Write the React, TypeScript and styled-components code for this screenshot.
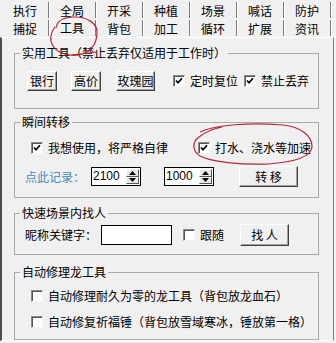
import React from "react";
import styled, { createGlobalStyle } from "styled-components";

const GlobalStyle = createGlobalStyle`
  html, body {
    margin: 0;
    padding: 0;
    background: #f0f0f0;
  }
  body {
    font-family: "Noto Sans CJK SC", "Noto Sans", sans-serif;
    font-size: 12px;
    color: #000;
  }
`;

const topTabs = ["执行", "全局", "开采", "种植", "场景", "喊话", "防护"];
const bottomTabs = ["捕捉", "工具", "背包", "加工", "循环", "扩展", "资讯"];

function Check({ checked }: { checked?: boolean }) {
  return (
    <CheckBox>
      {checked && (
        <svg width="8" height="8" viewBox="0 0 8 8">
          <path d="M1 3.5 L3 5.8 L7 1.2" fill="none" stroke="#000" strokeWidth="1.7" />
        </svg>
      )}
    </CheckBox>
  );
}

function CheckItem({
  label,
  checked,
  ml = 0,
}: {
  label: string;
  checked?: boolean;
  ml?: number;
}) {
  return (
    <CheckWrap $ml={ml}>
      <Check checked={checked} />
      <CheckLabel>{label}</CheckLabel>
    </CheckWrap>
  );
}

function Spin({ value, ml }: { value: string; ml: number }) {
  return (
    <SpinBox $ml={ml}>
      <SpinText>{value}</SpinText>
      <SpinButtons>
        <SpinBtn>
          <svg width="7" height="4" viewBox="0 0 7 4">
            <path d="M3.5 0 L7 4 L0 4 Z" fill="#000" />
          </svg>
        </SpinBtn>
        <SpinBtn>
          <svg width="7" height="4" viewBox="0 0 7 4">
            <path d="M0 0 L7 0 L3.5 4 Z" fill="#000" />
          </svg>
        </SpinBtn>
      </SpinButtons>
    </SpinBox>
  );
}

export default function App() {
  return (
    <Window>
      <GlobalStyle />
      <TabStrip>
        <TabRow>
          {topTabs.map((t) => (
            <Tab key={t}>{t}</Tab>
          ))}
        </TabRow>
        <TabRow>
          {bottomTabs.map((t) => (
            <Tab key={t} $active={t === "工具"}>
              {t}
            </Tab>
          ))}
        </TabRow>
      </TabStrip>

      <Panel>
        <Group $mt={0} $pb={17}>
          <Legend>实用工具（禁止丢弃仅适用于工作时）</Legend>
          <Row $mt={11} $h={20} $pl={12}>
            <Button $w={30} $h={20}>银行</Button>
            <Button $w={30} $h={20} $ml={14}>高价</Button>
            <Button $w={39} $h={20} $ml={15}>玫瑰园</Button>
            <CheckItem label="定时复位" checked ml={18} />
            <CheckItem label="禁止丢弃" checked ml={6} />
          </Row>
        </Group>

        <Group $mt={6} $pb={10}>
          <Legend>瞬间转移</Legend>
          <Row $mt={11} $h={16} $pl={16}>
            <CheckItem label="我想使用，将严格自律" checked />
            <CheckItem label="打水、浇水等加速" checked ml={30} />
          </Row>
          <Row $mt={10} $h={21} $pl={10}>
            <Hint>点此记录：</Hint>
            <Spin value="2100" ml={6} />
            <Spin value="1000" ml={23} />
            <Button $w={59} $h={21} $ml={25}>转 移</Button>
          </Row>
        </Group>

        <Group $mt={8} $pb={8}>
          <Legend>快速场景内找人</Legend>
          <Row $mt={4} $h={22} $pl={10}>
            <Text>昵称关键字：</Text>
            <TextInput />
            <CheckItem label="跟随" ml={11} />
            <Button $w={49} $h={22} $ml={16}>找 人</Button>
          </Row>
        </Group>

        <Group $mt={10} $pb={9}>
          <Legend>自动修理龙工具</Legend>
          <Row $mt={9} $h={16} $pl={16}>
            <CheckItem label="自动修理耐久为零的龙工具（背包放龙血石）" />
          </Row>
          <Row $mt={10} $h={16} $pl={16}>
            <CheckItem label="自动修复祈福锤（背包放雪域寒冰，锤放第一格）" />
          </Row>
        </Group>
      </Panel>

      <Annotation viewBox="0 0 336 343">
        <path
          d="M56 28 C 57 21, 64 17, 75 17 C 87 17, 97 23, 97 32 C 97 44, 91 52, 79 55 C 65 57, 53 51, 51 41 C 50 35, 52 31, 55 27 M70 55 C 80 54, 88 53, 96 52"
          fill="none"
          stroke="#b4283c"
          strokeWidth="1.2"
        />
        <path
          d="M200 132 C 215 125, 250 122, 283 125 C 300 127, 312 135, 312 147 C 311 157, 296 162, 268 164 C 240 165, 212 162, 200 156 C 192 151, 192 142, 199 137 C 205 132, 212 129, 222 127"
          fill="none"
          stroke="#b4283c"
          strokeWidth="1.2"
        />
      </Annotation>
    </Window>
  );
}

const Window = styled.div`
  position: relative;
  width: 336px;
  height: 343px;
  overflow: hidden;
  background: #f0f0f0;
  line-height: 14px;
`;

const TabStrip = styled.div`
  display: flex;
  flex-direction: column;
  padding-left: 2px;
`;

const TabRow = styled.div`
  display: grid;
  grid-template-columns: repeat(7, 47px);
  height: 18px;
`;

const Tab = styled.div<{ $active?: boolean }>`
  display: flex;
  align-items: center;
  justify-content: center;
  box-sizing: border-box;
  height: 16px;
  margin-top: 2px;
  padding-top: ${(p) => (p.$active ? 0 : 2)}px;
  border-right: 1px solid #7c7c7c;
  box-shadow: 1px 0 0 #ffffff;
  font-size: 12px;
  line-height: 14px;
`;

const Panel = styled.div`
  display: flex;
  flex-direction: column;
  box-sizing: border-box;
  width: 334px;
  margin-top: 1px;
  padding: 8px 14px 0 12px;
  border-top: 1px solid #ffffff;
  border-left: 2px solid #4a4a4a;
  border-right: 1px solid #808080;
  border-bottom: 1px solid #ffffff;
`;

const Group = styled.fieldset<{ $mt: number; $pb: number }>`
  margin: ${(p) => p.$mt}px 0 0;
  padding: 0 0 ${(p) => p.$pb}px;
  min-width: 0;
  border: 1px solid #a9a9a9;
`;

const Legend = styled.legend`
  margin-left: 5px;
  padding: 0 2px;
  font-size: 12px;
  line-height: 14px;
`;

const Row = styled.div<{ $mt: number; $h: number; $pl: number }>`
  display: flex;
  align-items: center;
  margin-top: ${(p) => p.$mt}px;
  height: ${(p) => p.$h}px;
  padding-left: ${(p) => p.$pl}px;
`;

const Button = styled.div<{ $w: number; $h: number; $ml?: number }>`
  display: flex;
  align-items: center;
  justify-content: center;
  box-sizing: border-box;
  width: ${(p) => p.$w}px;
  height: ${(p) => p.$h}px;
  margin-left: ${(p) => p.$ml ?? 0}px;
  background: #f0f0f0;
  border: 1px solid;
  border-color: #ffffff #404040 #404040 #ffffff;
  box-shadow: inset -1px -1px 0 #a0a0a0;
  white-space: pre;
  font-size: 12px;
`;

const CheckWrap = styled.div<{ $ml: number }>`
  display: flex;
  align-items: center;
  margin-left: ${(p) => p.$ml}px;
`;

const CheckBox = styled.span`
  display: flex;
  align-items: center;
  justify-content: center;
  box-sizing: border-box;
  width: 12px;
  height: 12px;
  flex-shrink: 0;
  background: #ffffff;
  border: 1px solid;
  border-color: #8a8a8a #f4f4f4 #f4f4f4 #8a8a8a;
  box-shadow: inset 1px 1px 0 #555555;
`;

const CheckLabel = styled.span`
  margin-left: 5px;
  white-space: nowrap;
`;

const Hint = styled.span`
  color: #3f8dbb;
  white-space: nowrap;
`;

const Text = styled.span`
  white-space: nowrap;
`;

const TextInput = styled.div`
  box-sizing: border-box;
  width: 71px;
  height: 20px;
  margin-left: 4px;
  background: #ffffff;
  border: 1px solid #000000;
`;

const SpinBox = styled.div<{ $ml: number }>`
  display: flex;
  justify-content: space-between;
  box-sizing: border-box;
  width: 50px;
  height: 19px;
  margin-left: ${(p) => p.$ml}px;
  padding: 1px;
  background: #ffffff;
  border: 1px solid #000000;
`;

const SpinText = styled.span`
  font-family: "Liberation Sans", Arial, sans-serif;
  font-size: 12px;
  line-height: 14px;
`;

const SpinButtons = styled.div`
  display: flex;
  flex-direction: column;
  width: 13px;
`;

const SpinBtn = styled.div`
  display: flex;
  align-items: center;
  justify-content: center;
  flex: 1;
  box-sizing: border-box;
  background: #e8e8e8;
  border: 1px solid;
  border-color: #ffffff #555555 #555555 #ffffff;
`;

const Annotation = styled.svg`
  position: absolute;
  left: 0;
  top: 0;
  width: 336px;
  height: 343px;
  pointer-events: none;
`;
